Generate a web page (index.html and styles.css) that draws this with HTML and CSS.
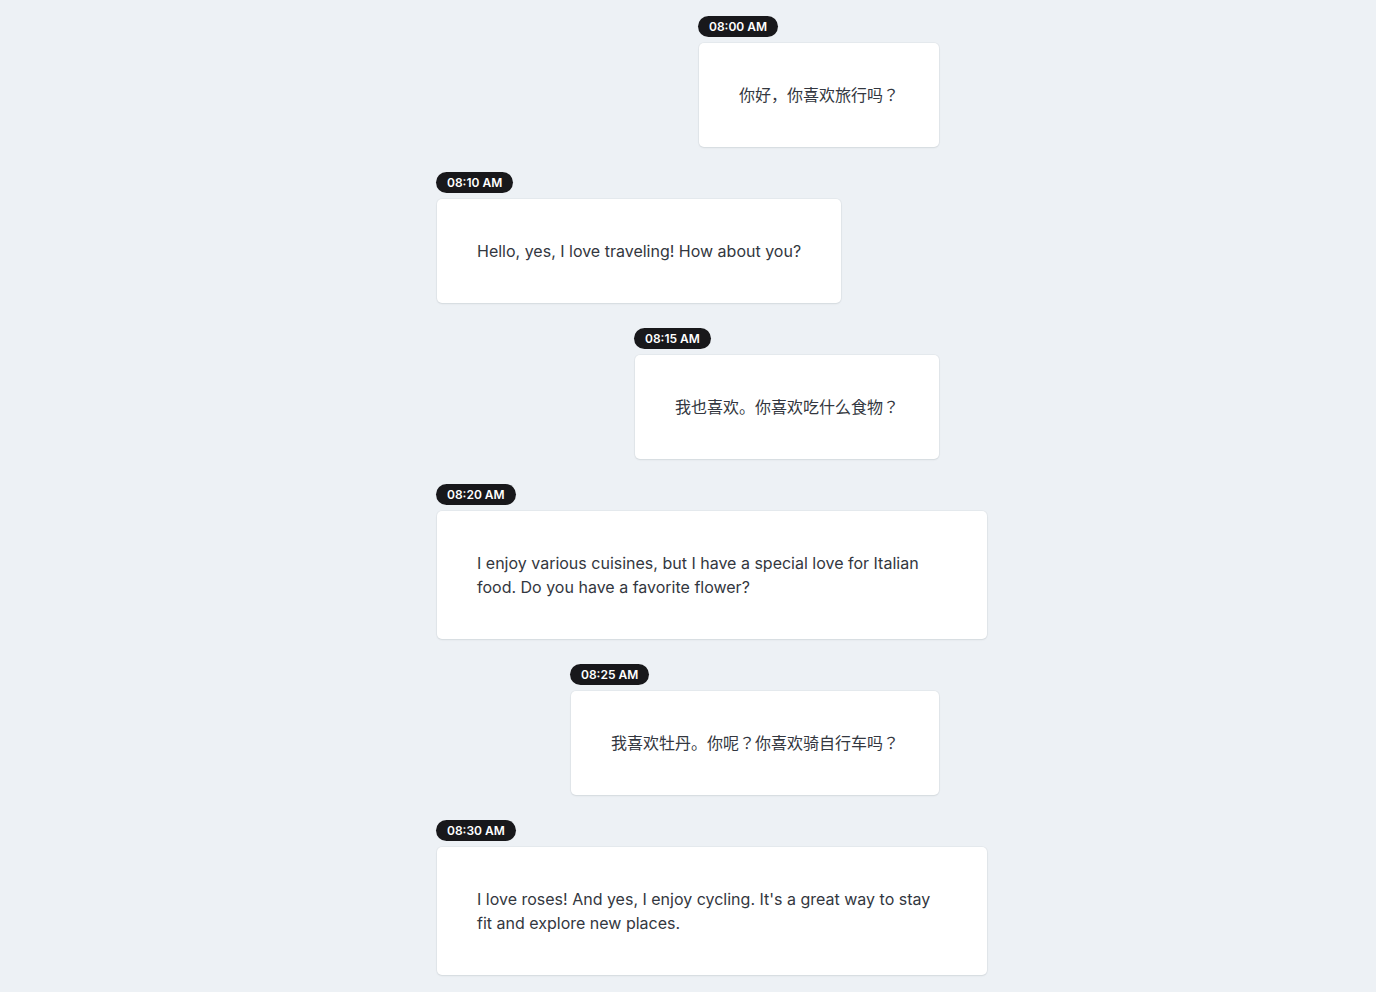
FILE: index.html
```html
<!DOCTYPE html>
<html lang="en">
<head>
<meta charset="utf-8">
<title>Chat</title>
<link rel="stylesheet" href="styles.css">
</head>
<body>
<div class="chat">
  <div class="msg right">
    <span class="time">08:00 AM</span>
    <div class="card">你好，你喜欢旅行吗？</div>
  </div>
  <div class="msg left">
    <span class="time">08:10 AM</span>
    <div class="card">Hello, yes, I love traveling! How about you?</div>
  </div>
  <div class="msg right">
    <span class="time">08:15 AM</span>
    <div class="card">我也喜欢。你喜欢吃什么食物？</div>
  </div>
  <div class="msg left">
    <span class="time">08:20 AM</span>
    <div class="card">I enjoy various cuisines, but I have a special love for Italian food. Do you have a favorite flower?</div>
  </div>
  <div class="msg right">
    <span class="time">08:25 AM</span>
    <div class="card">我喜欢牡丹。你呢？你喜欢骑自行车吗？</div>
  </div>
  <div class="msg left">
    <span class="time">08:30 AM</span>
    <div class="card">I love roses! And yes, I enjoy cycling. It's a great way to stay fit and explore new places.</div>
  </div>
</div>
</body>
</html>
```
FILE: styles.css
```css
html, body {
  margin: 0;
  padding: 0;
  background: #edf1f5;
}
body {
  font-family: Inter, "Noto Sans CJK JP", sans-serif;
  color: #333740;
}
.chat {
  width: 600px;
  margin: 0 auto;
  padding: 16px 0;
  display: flex;
  flex-direction: column;
  gap: 25px;
}
.msg {
  display: flex;
  flex-direction: column;
  align-items: flex-start;
  max-width: 552px;
}
.msg.left {
  align-self: flex-start;
  margin-left: 48px;
}
.msg.right {
  align-self: flex-end;
  margin-right: 49px;
}
.time {
  display: inline-block;
  height: 21px;
  line-height: 21px;
  padding: 0 11px;
  border-radius: 11px;
  background: #18181b;
  color: #ffffff;
  font-size: 12px;
  font-weight: 600;
  margin-bottom: 6px;
}
.card {
  box-sizing: border-box;
  max-width: 550px;
  background: #ffffff;
  border-radius: 5px;
  padding: 40px;
  font-size: 16px;
  line-height: 24px;
  box-shadow: 0 1px 2px rgba(15, 23, 42, 0.08), 0 0 0 1px rgba(15, 23, 42, 0.03);
  margin-left: 1px;
}
```
